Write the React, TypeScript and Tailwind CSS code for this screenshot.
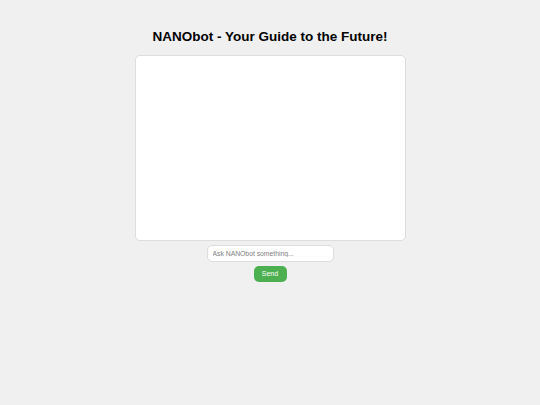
export default function App() {
  return (
    <div
      className="min-h-[405px] w-full bg-[#f0f0f0] flex flex-col items-center"
      style={{ fontFamily: '"Liberation Sans", Arial, sans-serif' }}
    >
      <h1 className="mt-[29px] text-[13.5px] leading-[16px] font-bold text-black">
        NANObot - Your Guide to the Future!
      </h1>
      <div className="mt-[10px] w-[271px] h-[186px] bg-white border border-[#dddddd] rounded-[5px]" />
      <input
        className="mt-[4px] w-[127px] h-[17px] bg-white border border-[#dddddd] rounded-[5px] px-[5px] text-[6.8px] text-black placeholder:text-[#808080] outline-none"
        placeholder="Ask NANObot something..."
      />
      <button className="mt-[4px] w-[33px] h-[16px] bg-[#4caf50] text-white text-[7px] rounded-[5px]">
        Send
      </button>
    </div>
  );
}
